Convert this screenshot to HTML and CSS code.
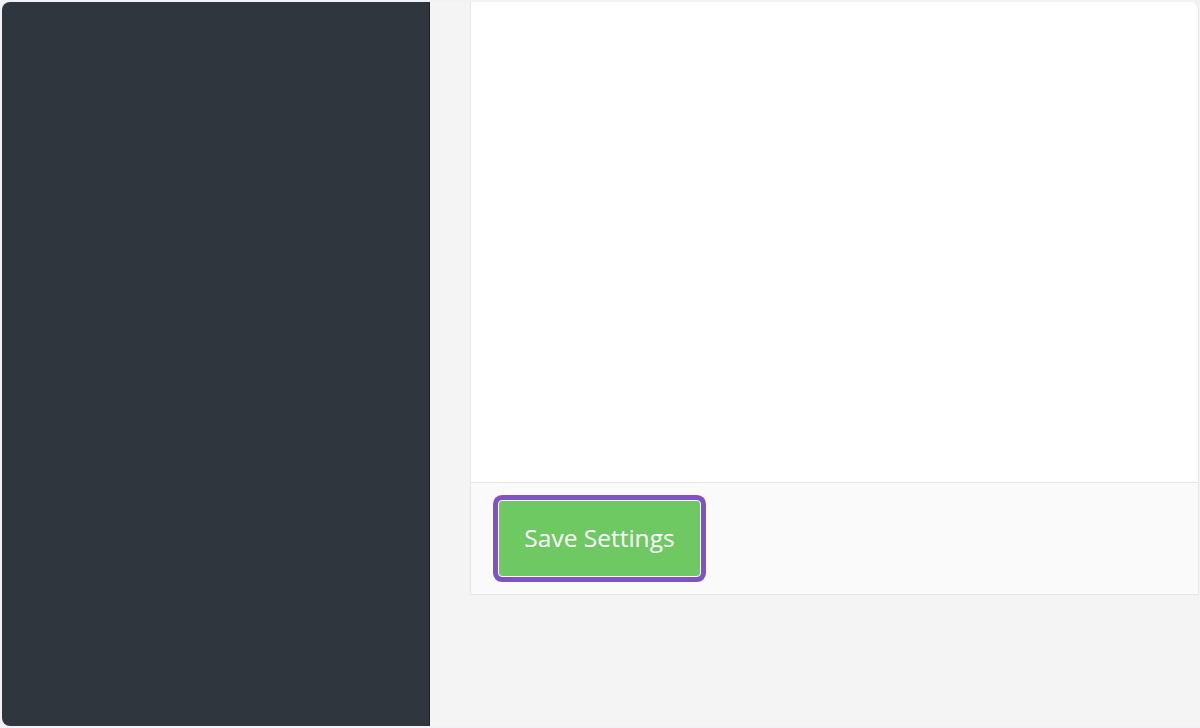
FILE: index.html
```html
<!DOCTYPE html>
<html>
<head>
<meta charset="utf-8">
<link rel="stylesheet" href="styles.css">
</head>
<body>
<div class="app">
  <aside class="sidebar"></aside>
  <main class="main">
    <section class="card">
      <div class="card-body"></div>
      <div class="card-footer">
        <button class="btn-save">Save Settings</button>
      </div>
    </section>
  </main>
</div>
</body>
</html>
```
FILE: styles.css
```css
html, body {
  margin: 0;
  padding: 0;
  height: 100%;
}
body {
  background: #f2f2f6;
  font-family: "Open Sans", "Liberation Sans", sans-serif;
}
.app {
  margin: 2px 0 2px 2px;
  height: 724px;
  display: flex;
  border-radius: 8px 8px 0 8px;
  overflow: hidden;
  background: #f4f4f4;
}
.sidebar {
  width: 427px;
  flex: none;
  background: #2f363e;
  border-right: 1px solid #1e242b;
}
.main {
  flex: 1;
  padding: 0 0 0 40px;
  background: #f4f4f4;
}
.card {
  background: #ffffff;
  border: 1px solid #e6e6e6;
  border-top: none;
  border-radius: 0 8px 0 0;
  margin-right: 1px;
}
.card-body {
  height: 480px;
  border-bottom: 1px solid #e6e6e6;
}
.card-footer {
  background: #fafafa;
  padding: 17px 0 17px 27px;
}
.btn-save {
  display: block;
  width: 203px;
  height: 77px;
  padding: 0 0 2px;
  background: #6fc963;
  color: #ffffff;
  font-family: "Open Sans", "Liberation Sans", sans-serif;
  font-size: 24.5px;
  border: 1px solid #ffffff;
  border-radius: 4px;
  box-shadow: 0 0 0 5px #8152c2;
  cursor: pointer;
}
```
